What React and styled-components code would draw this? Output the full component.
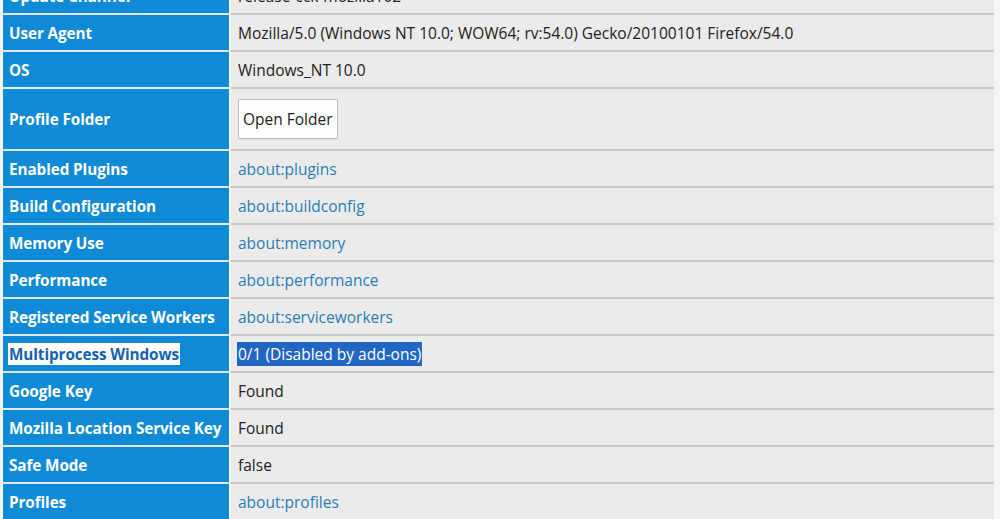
import React from 'react';
import styled, { createGlobalStyle } from 'styled-components';

const GlobalStyle = createGlobalStyle`
  html, body {
    margin: 0;
    padding: 0;
    background: #f5f5f5;
    overflow: hidden;
  }
  body {
    font-family: "Open Sans", "Noto Sans", sans-serif;
  }
`;

const Page = styled.div`
  width: 1000px;
  height: 519px;
  overflow: hidden;
`;

const Table = styled.div`
  margin: -22px 6px 0 3px;
  display: flex;
  flex-direction: column;
`;

const Row = styled.div`
  display: grid;
  grid-template-columns: 226px 1fr;
  column-gap: 2px;
  height: ${({ $tall }) => ($tall ? '62px' : '37px')};
`;

const Label = styled.div`
  background: #0e8ad7;
  border-bottom: 2px solid #e2e8ee;
  display: flex;
  align-items: center;
  padding-left: 6px;
  color: #fff;
  font-weight: 700;
  font-size: 15.3px;
  letter-spacing: -0.1px;
  white-space: nowrap;
  box-sizing: border-box;
`;

const Value = styled.div`
  background: #ebebeb;
  border-bottom: 2px solid #c9c9c9;
  display: flex;
  align-items: center;
  padding-left: 7px;
  color: #222;
  font-size: 15.5px;
  white-space: nowrap;
  box-sizing: border-box;
`;

const About = styled.a`
  color: #2a7db7;
  text-decoration: none;
`;

const Selected = styled.span`
  padding: 1px 1px;
  margin-left: -1px;
  background: ${({ $inverse }) => ($inverse ? '#ffffff' : '#2266c4')};
  color: ${({ $inverse }) => ($inverse ? '#1563b0' : '#ffffff')};
`;

const Button = styled.button`
  height: 40px;
  padding: 0 4px;
  background: #fdfdfd;
  border: 1px solid #bcbcbc;
  border-radius: 2px;
  font-family: "Open Sans", "Noto Sans", sans-serif;
  font-size: 15.5px;
  color: #222;
  box-shadow: 0 1px 1px rgba(0, 0, 0, 0.06);
`;

const rows = [
  { label: 'Update Channel', value: 'release-cck-mozilla102' },
  { label: 'User Agent', value: 'Mozilla/5.0 (Windows NT 10.0; WOW64; rv:54.0) Gecko/20100101 Firefox/54.0' },
  { label: 'OS', value: 'Windows_NT 10.0' },
  { label: 'Profile Folder', button: 'Open Folder' },
  { label: 'Enabled Plugins', link: 'about:plugins' },
  { label: 'Build Configuration', link: 'about:buildconfig' },
  { label: 'Memory Use', link: 'about:memory' },
  { label: 'Performance', link: 'about:performance' },
  { label: 'Registered Service Workers', link: 'about:serviceworkers' },
  { label: 'Multiprocess Windows', value: '0/1 (Disabled by add-ons)', selected: true },
  { label: 'Google Key', value: 'Found' },
  { label: 'Mozilla Location Service Key', value: 'Found' },
  { label: 'Safe Mode', value: 'false' },
  { label: 'Profiles', link: 'about:profiles' },
];

const App = () => (
  <Page>
    <GlobalStyle />
    <Table>
      {rows.map(r => (
        <Row key={r.label} $tall={!!r.button}>
          <Label>
            {r.selected ? <Selected $inverse>{r.label}</Selected> : r.label}
          </Label>
          <Value>
            {r.button && <Button>{r.button}</Button>}
            {r.link && <About href="#">{r.link}</About>}
            {r.value && (r.selected ? <Selected>{r.value}</Selected> : r.value)}
          </Value>
        </Row>
      ))}
    </Table>
  </Page>
);

export default App;
